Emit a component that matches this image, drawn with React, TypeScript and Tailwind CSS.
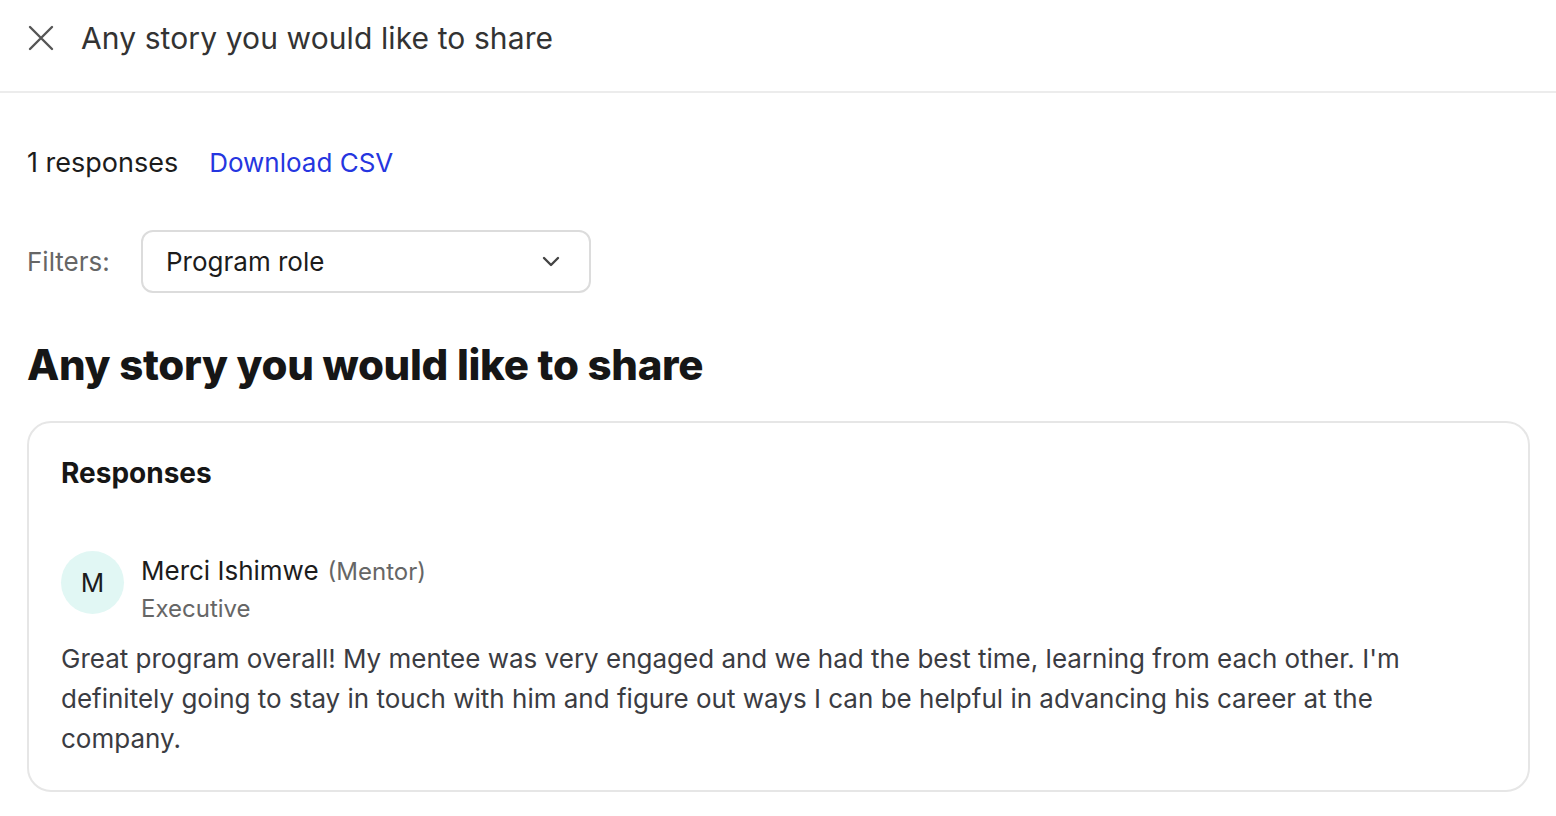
import React from "react";

export default function App() {
  return (
    <div className="min-h-[816px] w-[1556px] bg-white" style={{ fontFamily: "Inter, 'Noto Sans', sans-serif" }}>
      <div className="flex h-[93px] items-center border-b-2 border-[#ececec] pb-[16px] pl-[28px]">
        <svg width="26" height="26" viewBox="0 0 26 26" className="shrink-0">
          <path d="M2 2 L24 24 M24 2 L2 24" stroke="#555" strokeWidth="2.4" strokeLinecap="round" />
        </svg>
        <div className="ml-[27px] text-[30px] leading-none text-[#333] tracking-[0.1px]">Any story you would like to share</div>
      </div>
      <div className="px-[27px]">
        <div className="mt-[52px] flex items-center gap-[31px] text-[27px] leading-[36px]">
          <span className="text-[#1c1c1c]">1 responses</span>
          <span className="text-[26px] text-[#2536e0]">Download CSV</span>
        </div>
        <div className="mt-[49px] flex items-center">
          <span className="w-[114px] text-[26px] text-[#666]">Filters:</span>
          <div className="flex h-[63px] w-[450px] items-center justify-between rounded-[12px] border-2 border-[#dcdcdc] pl-[23px] pr-[28px]">
            <span className="text-[26px] text-[#1c1c1c]">Program role</span>
            <svg width="20" height="12" viewBox="0 0 20 12">
              <path d="M3 2 L10 9 L17 2" stroke="#444" strokeWidth="2.4" fill="none" strokeLinecap="round" strokeLinejoin="round" />
            </svg>
          </div>
        </div>
        <h1 className="mt-[44px] text-[42px] font-extrabold leading-[56px] tracking-[-0.3px] text-[#161616]">Any story you would like to share</h1>
        <div className="mt-[28px] w-[1503px] rounded-[24px] border-2 border-[#e6e6e6] px-[32px] pb-[31px] pt-[30px]">
          <div className="text-[28px] font-bold leading-[40px] text-[#161616]">Responses</div>
          <div className="mt-[58px] flex items-start">
            <div className="flex h-[63px] w-[63px] shrink-0 items-center justify-center rounded-full bg-[#e1f7f4] text-[26px] text-[#1c1c1c]">M</div>
            <div className="ml-[17px] mt-[2px] flex flex-col">
              <div className="leading-[36px]">
                <span className="text-[26px] text-[#1c1c1c]">Merci Ishimwe</span>
                <span className="ml-[9px] text-[24px] text-[#666]">(Mentor)</span>
              </div>
              <div className="text-[24px] leading-[34px] text-[#666]">Executive</div>
            </div>
          </div>
          <p className="mt-[13px] text-[26px] leading-[40px] text-[#3b3c42]">
            Great program overall! My mentee was very engaged and we had the best time, learning from each other. I'm definitely going to stay in touch with him and figure out ways I can be helpful in advancing his career at the company.
          </p>
        </div>
      </div>
    </div>
  );
}
